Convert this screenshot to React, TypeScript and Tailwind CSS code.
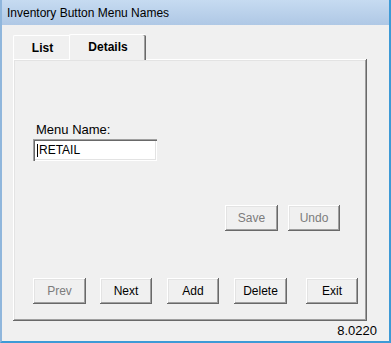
const RAISED =
  "shadow-[inset_-1px_-1px_#696969,inset_1px_1px_#ffffff,inset_-2px_-2px_#a0a0a0,inset_2px_2px_#e3e3e3]";

function Btn({
  label,
  disabled,
  className = "",
}: {
  label: string;
  disabled?: boolean;
  className?: string;
}) {
  return (
    <button
      className={`h-[26px] bg-[#f0f0f0] text-[12px] leading-none ${RAISED} ${
        disabled ? "text-[#7c7c7c]" : "text-black"
      } ${className}`}
    >
      {label}
    </button>
  );
}

export default function App() {
  return (
    <div
      className="w-[391px] h-[343px] flex flex-col bg-[#f0f0f0] border-l-2 border-r-2 border-b-2 border-l-[#8fb6dc] border-r-[#3d9ad6] border-b-[#3d9ad6] overflow-hidden"
      style={{ fontFamily: '"Liberation Sans", Arial, sans-serif' }}
    >
      {/* title bar */}
      <div className="h-[25px] shrink-0 flex items-center pl-[5px] bg-gradient-to-b from-[#c6dbf1] to-[#afc8e5] text-[12px] text-black">
        Inventory Button Menu Names
      </div>

      <div className="flex-1 flex flex-col pl-[11px]">
        {/* tabs */}
        <div className="mt-[8px] h-[26px] flex items-end">
          <div className="w-[56px] h-[24px] flex items-center justify-center border-t border-l border-white rounded-tl-[2px] text-[12px] font-bold pl-[2px]">
            List
          </div>
          <div className="w-[77px] h-[26px] flex items-center justify-center border-t border-l border-white rounded-t-[2px] shadow-[inset_-1px_0_#696969,inset_-2px_0_#a0a0a0] text-[12px] font-bold pb-[2px] relative z-10 -mb-[1px] bg-[#f0f0f0]">
            Details
          </div>
        </div>

        {/* panel */}
        <div className={`w-[354px] h-[262px] flex flex-col pl-[20px] ${RAISED}`}>
          <div className="mt-[63px] text-[13px] leading-[15px] pl-[3px]">Menu Name:</div>
          <div className="mt-[2px] w-[124px] h-[22px] bg-white flex items-center pl-[4px] text-[12px] shadow-[inset_1px_1px_#a0a0a0,inset_2px_2px_#696969,inset_-1px_-1px_#ffffff,inset_-2px_-2px_#e3e3e3]">
            <span className="w-px h-[13px] bg-black mr-[1px]" />
            RETAIL
          </div>

          <div className="mt-[44px] flex justify-end pr-[27px] gap-[10px]">
            <Btn label="Save" disabled className="w-[53px]" />
            <Btn label="Undo" disabled className="w-[52px]" />
          </div>

          <div className="mt-[47px] flex">
            <Btn label="Prev" disabled className="w-[53px]" />
            <Btn label="Next" className="w-[52px] ml-[14px]" />
            <Btn label="Add" className="w-[52px] ml-[15px]" />
            <Btn label="Delete" className="w-[53px] ml-[15px]" />
            <Btn label="Exit" className="w-[52px] ml-[19px]" />
          </div>
        </div>

        <div className="flex-1 flex items-center justify-end pr-[12px] text-[13px] text-black">
          8.0220
        </div>
      </div>
    </div>
  );
}
